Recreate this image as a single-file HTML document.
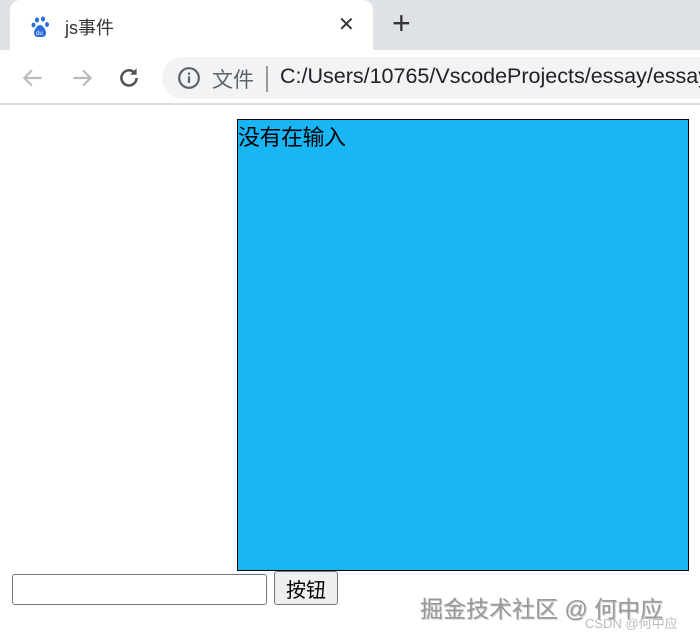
<!DOCTYPE html>
<html><head><meta charset="utf-8"><style>
*{margin:0;padding:0;box-sizing:border-box}
body{width:700px;height:638px;overflow:hidden;background:#fff;font-family:"Liberation Sans","Noto Sans CJK SC",sans-serif;position:relative}
.strip{position:absolute;left:0;top:0;width:700px;height:50px;background:#dee1e6}
.tab{position:absolute;left:10px;top:0;width:363px;height:52px;background:#fff;border-radius:10px 10px 0 0}
.tabt{position:absolute;left:65px;top:14px;font-size:18px;color:#333}
.x{position:absolute;left:338px;top:12px;font-size:20px;color:#333}
.plus{position:absolute;left:392px;top:5px;font-size:32px;color:#333}
.bar{position:absolute;left:0;top:50px;width:700px;height:55px;background:#fff;border-bottom:2px solid #ddd}
.omni{position:absolute;left:162px;top:57px;width:560px;height:42px;background:#f1f3f4;border-radius:21px}
.url{position:absolute;left:280px;top:64px;font-size:21.5px;color:#202124;white-space:nowrap}
.wj{position:absolute;left:212px;top:64px;font-size:21px;color:#5f6368}
.sep{position:absolute;left:266px;top:66px;width:1.5px;height:26px;background:#999}
.box{position:absolute;left:237px;top:119px;width:452px;height:452px;background:#19b6f5;border:1px solid #000;font-size:22px;line-height:36px;color:#000;letter-spacing:-0.5px}
input{position:absolute;left:12px;top:574px;width:255px;height:31px;border:1px solid #767676;border-radius:3px;background:#fff}
button{position:absolute;left:274px;top:571px;width:64px;height:34px;border:1px solid #767676;border-radius:3px;background:#efefef;font-size:20px;font-family:"Liberation Sans","Noto Sans CJK SC",sans-serif;color:#000}
.wm{position:absolute;left:420px;top:590px;font-size:23px;color:#999;text-shadow:1px 1px 0 #ccc;white-space:nowrap}
.cs{position:absolute;left:585px;top:613px;font-size:13px;color:#bbb;white-space:nowrap}
</style></head><body>
<div class="strip"></div>
<div class="tab"></div>
<svg style="position:absolute;left:31px;top:16px" width="22" height="22" viewBox="0 0 22 22"><g fill="#2b6de0"><ellipse cx="6" cy="4" rx="2" ry="2.6"/><ellipse cx="12" cy="3" rx="2" ry="2.6"/><ellipse cx="2.5" cy="9" rx="2" ry="2.4"/><ellipse cx="16" cy="8.5" rx="2" ry="2.4"/><path d="M9 9c-3 0-6 5-6 8s2 4 4 4h4c2 0 4-1 4-4s-3-8-6-8z"/></g><text x="5" y="19" font-size="6" fill="#fff" font-family="Liberation Sans">du</text></svg>
<div class="tabt">js事件</div>
<div class="x">✕</div>
<div class="plus">+</div>
<div class="bar"></div>
<svg style="position:absolute;left:20px;top:65px" width="26" height="26" viewBox="0 0 24 24"><path d="M20 12H5M11 5l-7 7 7 7" stroke="#bbb" stroke-width="2" fill="none"/></svg>
<svg style="position:absolute;left:69px;top:65px" width="26" height="26" viewBox="0 0 24 24"><path d="M4 12h15M13 5l7 7-7 7" stroke="#bbb" stroke-width="2" fill="none"/></svg>
<svg style="position:absolute;left:116px;top:65px" width="26" height="26" viewBox="0 0 24 24"><path d="M19 12a7 7 0 1 1-2-5" stroke="#555" stroke-width="2.4" fill="none"/><path d="M19 3v6h-6z" fill="#555"/></svg>
<div class="omni"></div>
<svg style="position:absolute;left:177px;top:66px" width="24" height="24" viewBox="0 0 22 22"><circle cx="11" cy="11" r="9" stroke="#5f6368" stroke-width="2" fill="none"/><rect x="10" y="9.5" width="2" height="6" fill="#5f6368"/><rect x="10" y="6" width="2" height="2" fill="#5f6368"/></svg>
<div class="wj">文件</div><div class="sep"></div>
<div class="url">C:/Users/10765/VscodeProjects/essay/essay</div>
<div class="box">没有在输入</div>
<input type="text"><button>按钮</button>
<div class="wm">掘金技术社区 @ 何中应</div>
<div class="cs">CSDN @何中应</div>
</body></html>
